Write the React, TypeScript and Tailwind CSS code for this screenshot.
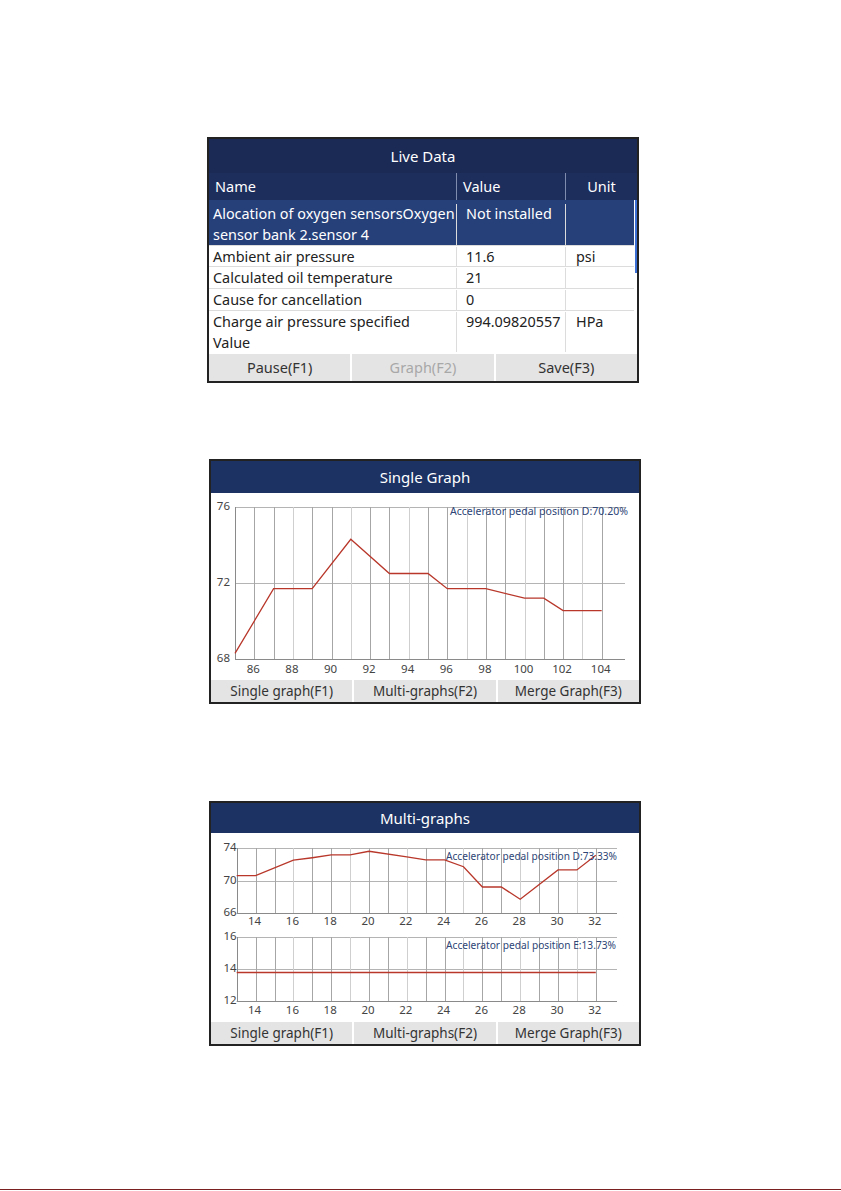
import React from "react";

type Pt = [number, number];

interface PlotProps {
  top: number;
  bottom: number;
  left: number;
  right: number;
  xMin: number;
  xMax: number;
  step: number;
  yMin: number;
  yMax: number;
  yTicks: number[];
  xTicks: number[];
  labelY: number;
  labelGap: number;
  points: Pt[];
  legend: string;
  legendX: number;
  legendY: number;
  legendLen: number;
}

const Plot = (p: PlotProps) => {
  const sx = (x: number) => p.left + (x - p.xMin) * p.step;
  const sy = (v: number) =>
    p.bottom - ((v - p.yMin) * (p.bottom - p.top)) / (p.yMax - p.yMin);

  const verticals: number[] = [];
  for (let x = p.xMin + 1; x <= p.xMax; x++) verticals.push(x);

  return (
    <g>
      {p.yTicks.map((v) => (
        <line
          key={"h" + v}
          x1={p.left}
          x2={p.right}
          y1={Math.round(sy(v)) + 0.5}
          y2={Math.round(sy(v)) + 0.5}
          stroke={v === p.yMin ? "#8a8a8a" : "#b4b4b4"}
          strokeWidth={1}
        />
      ))}
      {verticals.map((x, i) => (
        <line
          key={"v" + x}
          x1={Math.round(sx(x)) + 0.5}
          x2={Math.round(sx(x)) + 0.5}
          y1={p.top}
          y2={p.bottom}
          stroke={i % 3 === 2 ? "#cfcfcf" : "#a6a6a6"}
          strokeWidth={1}
        />
      ))}
      <line
        x1={Math.round(p.left) + 0.5}
        x2={Math.round(p.left) + 0.5}
        y1={p.top}
        y2={p.bottom}
        stroke="#8a8a8a"
      />
      {p.yTicks.map((v) => (
        <text
          key={"yl" + v}
          x={p.left - p.labelGap}
          y={sy(v)}
          textAnchor="end"
          dominantBaseline="middle"
          fontSize={11.5}
          fill="#444"
        >
          {v}
        </text>
      ))}
      {p.xTicks.map((x) => (
        <text
          key={"xl" + x}
          x={sx(x) - 1}
          y={p.labelY}
          textAnchor="middle"
          dominantBaseline="middle"
          fontSize={11.5}
          fill="#444"
        >
          {x}
        </text>
      ))}
      <polyline
        points={p.points.map(([x, v]) => `${sx(x)},${sy(v)}`).join(" ")}
        fill="none"
        stroke="#b8372a"
        strokeWidth={1.3}
      />
      <text
        x={p.legendX}
        y={p.legendY}
        textAnchor="end"
        dominantBaseline="middle"
        fontSize={11}
        fill="#2e4576"
        textLength={p.legendLen}
        lengthAdjust="spacingAndGlyphs"
      >
        {p.legend}
      </text>
    </g>
  );
};

const Footer = ({
  items,
  height,
  size,
}: {
  items: { label: string; dim?: boolean }[];
  height: string;
  size: string;
}) => (
  <div className={`flex ${height} bg-[#e4e4e4]`}>
    {items.map((it, i) => (
      <div
        key={i}
        className={`flex-1 flex items-center justify-center bg-[#e4e4e4] ${size} ${
          it.dim ? "text-[#a8a8a8]" : "text-[#333]"
        } ${i > 0 ? "border-l-2 border-white" : ""}`}
      >
        {it.label}
      </div>
    ))}
  </div>
);

const rows = [
  { name: ["Alocation of oxygen sensorsOxygen", "sensor bank 2.sensor 4"], value: "Not installed", unit: "", active: true, h: "h-[46px]" },
  { name: ["Ambient air pressure"], value: "11.6", unit: "psi", h: "h-[21px]" },
  { name: ["Calculated oil temperature"], value: "21", unit: "", h: "h-[22px]" },
  { name: ["Cause for cancellation"], value: "0", unit: "", h: "h-[22px]" },
  { name: ["Charge air pressure specified", "Value"], value: "994.09820557", unit: "HPa", h: "h-[42px]" },
];

const LiveData = () => (
  <div className="w-[432px] h-[246px] border-2 border-[#222] flex flex-col bg-white">
    <div className="h-[34px] shrink-0 bg-[#1b2a55] text-white text-[15px] flex items-center justify-center">
      Live Data
    </div>
    <div className="h-[27px] shrink-0 bg-[#1d2d5c] text-white text-[14.5px] flex">
      <div className="w-[248px] pl-[6px] flex items-center border-r border-[#7f8cae]">Name</div>
      <div className="w-[109px] pl-[6px] flex items-center border-r border-[#7f8cae]">Value</div>
      <div className="flex-1 flex items-center justify-center">Unit</div>
    </div>
    <div className="h-[152px] shrink-0 flex overflow-hidden">
      <div className="w-[425px] flex flex-col text-[14.4px] leading-[20px] text-[#222]">
        {rows.map((r, i) => (
          <div
            key={i}
            className={`flex shrink-0 items-start border-b border-[#dcdcdc] ${r.h} ${
              r.active ? "bg-[#26407a] text-white pt-[4px]" : "pt-px"
            }`}
          >
            <div className="w-[248px] h-full pl-[4px] border-r border-[#dcdcdc] whitespace-nowrap">
              {r.name.map((n, j) => (
                <div key={j} className={j > 0 ? "mt-px" : ""}>
                  {n}
                </div>
              ))}
            </div>
            <div className="w-[109px] h-full pl-[9px] border-r border-[#dcdcdc] whitespace-nowrap">
              {r.value}
            </div>
            <div className="flex-1 pl-[10px]">{r.unit}</div>
          </div>
        ))}
      </div>
      <div className="flex-1 flex flex-col items-center">
        <div className="w-[2px] h-[73px] bg-[#3b6fd4]" />
      </div>
    </div>
    <div className="h-[2px] shrink-0 bg-white" />
    <Footer
      height="h-[27px]"
      size="text-[14.5px]"
      items={[{ label: "Pause(F1)" }, { label: "Graph(F2)", dim: true }, { label: "Save(F3)" }]}
    />
  </div>
);

const graphFooter = [
  { label: "Single graph(F1)" },
  { label: "Multi-graphs(F2)" },
  { label: "Merge Graph(F3)" },
];

const SingleGraph = () => (
  <div className="w-[432px] h-[245px] border-2 border-[#222] flex flex-col bg-white">
    <div className="h-[32px] shrink-0 bg-[#1b3263] text-white text-[15px] flex items-center justify-center">
      Single Graph
    </div>
    <svg width={428} height={187} className="block shrink-0" style={{ fontFamily: "'Noto Sans', sans-serif" }}>
      <Plot
        top={14}
        bottom={166}
        left={24}
        right={414}
        xMin={85}
        xMax={104}
        step={19.3}
        yMin={68}
        yMax={76}
        yTicks={[68, 72, 76]}
        xTicks={[86, 88, 90, 92, 94, 96, 98, 100, 102, 104]}
        labelY={177}
        labelGap={5}
        points={[
          [85, 68.3],
          [87, 71.7],
          [89, 71.7],
          [91, 74.3],
          [93, 72.5],
          [95, 72.5],
          [96, 71.7],
          [98, 71.7],
          [100, 71.2],
          [101, 71.2],
          [102, 70.55],
          [104, 70.55],
        ]}
        legend="Accelerator pedal position D:70.20%"
        legendX={417}
        legendY={19}
        legendLen={178}
      />
    </svg>
    <Footer height="h-[22px]" size="text-[13.5px]" items={graphFooter} />
  </div>
);

const MultiGraphs = () => (
  <div className="w-[432px] h-[245px] border-2 border-[#222] flex flex-col bg-white">
    <div className="h-[30px] shrink-0 bg-[#1b3263] text-white text-[15px] flex items-center justify-center">
      Multi-graphs
    </div>
    <svg width={428} height={189} className="block shrink-0" style={{ fontFamily: "'Noto Sans', sans-serif" }}>
      <Plot
        top={15}
        bottom={80}
        left={25.7}
        right={406}
        xMin={13}
        xMax={32}
        step={18.9}
        yMin={66}
        yMax={74}
        yTicks={[66, 70, 74]}
        xTicks={[14, 16, 18, 20, 22, 24, 26, 28, 30, 32]}
        labelY={89}
        labelGap={0}
        points={[
          [13, 70.6],
          [14, 70.6],
          [16, 72.5],
          [17, 72.8],
          [18, 73.15],
          [19, 73.15],
          [20, 73.6],
          [22, 72.9],
          [23, 72.55],
          [24, 72.55],
          [25, 71.7],
          [26, 69.2],
          [27, 69.2],
          [28, 67.7],
          [30, 71.3],
          [31, 71.3],
          [32, 73.1],
        ]}
        legend="Accelerator pedal position D:73.33%"
        legendX={406}
        legendY={24}
        legendLen={171}
      />
      <Plot
        top={104}
        bottom={168}
        left={25.7}
        right={406}
        xMin={13}
        xMax={32}
        step={18.9}
        yMin={12}
        yMax={16}
        yTicks={[12, 14, 16]}
        xTicks={[14, 16, 18, 20, 22, 24, 26, 28, 30, 32]}
        labelY={178}
        labelGap={0}
        points={[
          [13, 13.78],
          [32, 13.78],
        ]}
        legend="Accelerator pedal position E:13.73%"
        legendX={405}
        legendY={113}
        legendLen={170}
      />
    </svg>
    <Footer height="h-[22px]" size="text-[13.5px]" items={graphFooter} />
  </div>
);

export default function App() {
  return (
    <div
      className="w-[841px] h-[1191px] bg-white flex flex-col"
      style={{ fontFamily: "'Noto Sans', 'Open Sans', sans-serif" }}
    >
      <div className="ml-[207px] mt-[137px]">
        <LiveData />
      </div>
      <div className="ml-[209px] mt-[76px]">
        <SingleGraph />
      </div>
      <div className="ml-[209px] mt-[97px]">
        <MultiGraphs />
      </div>
      <div className="mt-auto mb-[1px] h-px bg-[#7a2020]" />
    </div>
  );
}
